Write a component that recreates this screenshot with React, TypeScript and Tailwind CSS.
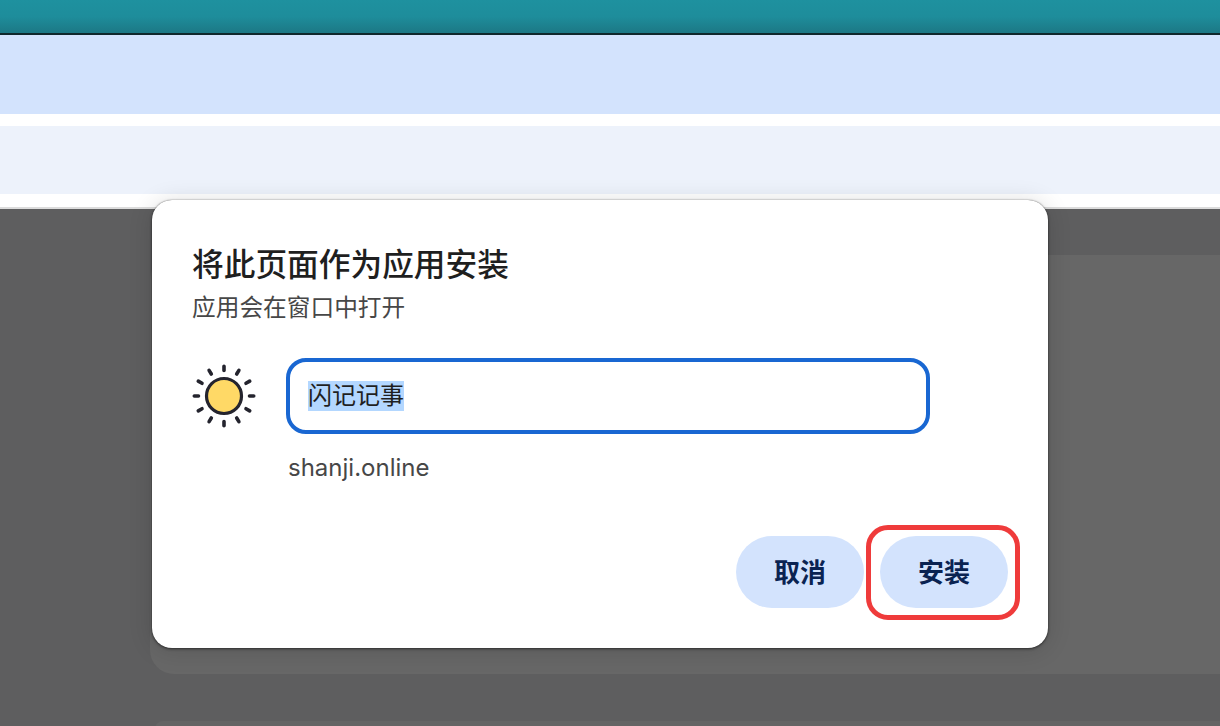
export default function App() {
  const font = { fontFamily: 'Inter, "Noto Sans CJK SC", sans-serif' };
  return (
    <div className="relative w-[1220px] h-[726px] overflow-hidden bg-white flex flex-col" style={font}>
      <div className="h-[33px] shrink-0 bg-gradient-to-b from-[#1e919f] via-[#1e8d9b] to-[#1c7885]" />
      <div className="h-[2px] shrink-0 bg-[#10282c]" />
      <div className="h-[79px] shrink-0 bg-[#d3e3fd]" />
      <div className="h-[12px] shrink-0 bg-white" />
      <div className="h-[68px] shrink-0 bg-[#edf2fb]" />
      <div className="h-[13px] shrink-0 bg-white" />
      <div className="h-[2px] shrink-0 bg-[#dcdcdc]" />
      <div className="flex-1 bg-[#5e5e5f] flex flex-col items-end pt-[46px]">
        <div className="w-[1070px] h-[419px] shrink-0 rounded-l-[24px] bg-[#676767]" />
        <div className="w-[1065px] h-[8px] mt-[47px] shrink-0 rounded-tl-[12px] bg-[#646464]" />
      </div>

      <div className="absolute left-[152px] top-[200px] w-[896px] h-[448px] rounded-[20px] bg-white pl-10 pr-[118px] pt-[46px] flex flex-col shadow-[0_1px_3px_rgba(0,0,0,0.5),0_0_1px_rgba(0,0,0,0.6),0_2px_24px_rgba(0,0,0,0.14)]">
        <div className="text-[31.7px] leading-[38px] font-medium text-[#1f1f1f]">将此页面作为应用安装</div>
        <div className="text-[23.7px] leading-[30px] mt-[9px] text-[#474747]">应用会在窗口中打开</div>
        <div className="flex items-center mt-[35px]">
          <svg viewBox="0 0 64 64" className="w-[64px] h-[64px] shrink-0" fill="none">
            <circle cx="32" cy="32" r="17.5" fill="#ffd966" stroke="#24242e" strokeWidth="3.2" />
            <g stroke="#24242e" strokeWidth="3.6" strokeLinecap="round">
              <path d="M32 2.3v4.2M32 57.5v4.2M2.3 32h4.2M57.5 32h4.2" />
              <path d="M17.1 6.3l2.2 3.7M46.9 6.3l-2.2 3.7M17.1 57.7l2.2-3.7M46.9 57.7l-2.2-3.7" />
              <path d="M6.3 17.1l3.7 2.2M57.7 17.1l-3.7 2.2M6.3 46.9l3.7-2.2M57.7 46.9l-3.7-2.2" />
            </g>
          </svg>
          <div className="ml-[30px] w-[644px] h-[76px] shrink-0 rounded-[20px] border-4 border-[#1967d2] flex items-center pl-[18px]">
            <span className="bg-[#b3d7ff] text-[24px] leading-[30px] text-[#1f1f1f]">闪记记事</span>
          </div>
        </div>
        <div className="ml-[96px] mt-[19px] text-[24px] leading-[30px] text-[#474747]">shanji.online</div>
        <div className="flex justify-end -mr-[78px] mt-[53px] gap-4">
          <button className="w-[128px] h-[72px] rounded-[36px] bg-[#d3e3fd] text-[26px] font-semibold text-[#0a2352]">取消</button>
          <button className="w-[128px] h-[72px] rounded-[36px] bg-[#d3e3fd] text-[26px] font-semibold text-[#0a2352]">安装</button>
        </div>
      </div>

      <div className="absolute left-[866px] top-[525px] w-[154px] h-[95px] rounded-[22px] border-[5px] border-[#ef3b3b]" />
    </div>
  );
}
